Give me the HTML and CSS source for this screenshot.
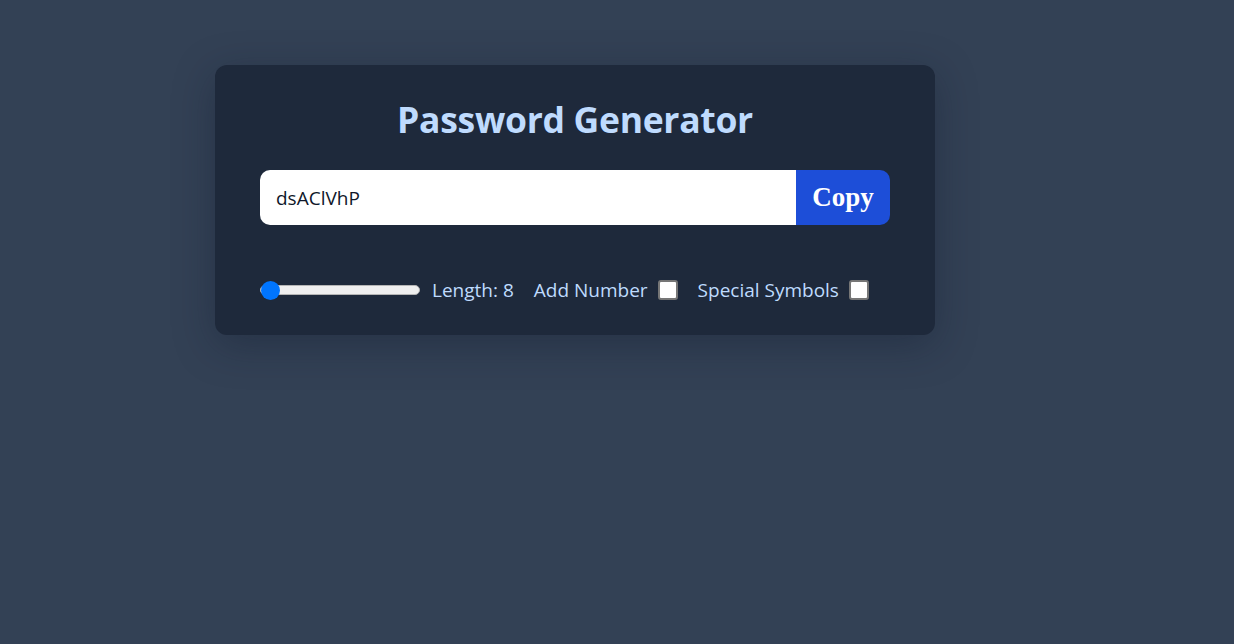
FILE: index.html
```html
<!DOCTYPE html>
<html>
<head>
<meta charset="utf-8">
<link rel="stylesheet" href="styles.css">
</head>
<body>
<div class="card">
  <h1 class="title">Password Generator</h1>
  <div class="field">
    <input class="pw" type="text" value="dsAClVhP" readonly>
    <button class="copy">Copy</button>
  </div>
  <div class="controls">
    <div class="ctl ctl-range">
      <input class="range" type="range" min="6" max="100" value="6">
      <label class="lbl">Length: 8</label>
    </div>
    <div class="ctl">
      <label class="lbl">Add Number</label>
      <input class="chk" type="checkbox">
    </div>
    <div class="ctl">
      <label class="lbl">Special Symbols</label>
      <input class="chk" type="checkbox">
    </div>
  </div>
</div>
</body>
</html>
```
FILE: styles.css
```css
html, body {
  margin: 0;
  padding: 0;
  background: #334155;
  height: 100%;
}
body {
  font-family: "Open Sans", "Noto Sans", sans-serif;
}
.card {
  box-sizing: border-box;
  width: 720px;
  margin: 65px 0 0 215px;
  padding: 30px 45px 33px;
  background: #1e293b;
  border-radius: 12px;
  box-shadow: 0 10px 40px rgba(15, 23, 42, 0.35);
}
.title {
  margin: 0;
  text-align: center;
  font-size: 35.5px;
  line-height: 48px;
  font-weight: 700;
  color: #bfdbfe;
  letter-spacing: -0.3px;
}
.field {
  display: flex;
  margin-top: 27px;
  height: 55px;
  border-radius: 10px;
  overflow: hidden;
}
.pw {
  flex: 1;
  border: none;
  outline: none;
  padding: 0 16px;
  font-family: "Open Sans", "Noto Sans", sans-serif;
  font-size: 19px;
  color: #0f172a;
  background: #fff;
  min-width: 0;
}
.copy {
  width: 94px;
  border: none;
  background: #1d4ed8;
  color: #fff;
  font-family: "Liberation Serif", serif;
  font-weight: 700;
  font-size: 27px;
  padding: 0;
}
.controls {
  display: flex;
  align-items: center;
  gap: 20px;
  margin-top: 53px;
  height: 24px;
}
.ctl {
  display: flex;
  align-items: center;
  gap: 10px;
}
.ctl-range {
  gap: 12px;
}
.range {
  -webkit-appearance: none;
  appearance: none;
  box-sizing: border-box;
  width: 160px;
  height: 10px;
  margin: 0;
  background: #efefef;
  border: 1px solid #b5b5b5;
  border-radius: 5px;
  outline: none;
}
.range::-webkit-slider-thumb {
  -webkit-appearance: none;
  appearance: none;
  width: 19px;
  height: 19px;
  border-radius: 50%;
  background: #0075ff;
  border: none;
}
.lbl {
  font-size: 19px;
  color: #bfdbfe;
  line-height: 24px;
}
.chk {
  -webkit-appearance: none;
  appearance: none;
  box-sizing: border-box;
  width: 20px;
  height: 20px;
  margin: 0;
  background: #fff;
  border: 2px solid #767676;
  border-radius: 3px;
}
```
